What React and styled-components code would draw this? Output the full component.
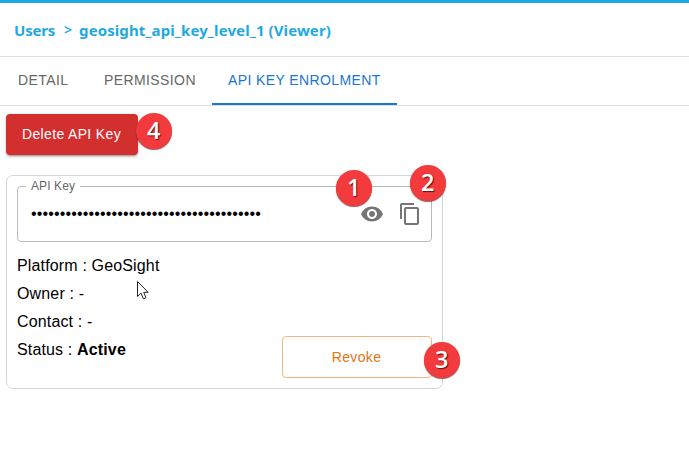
import React from "react";
import styled, { createGlobalStyle } from "styled-components";
import { MdVisibility, MdContentCopy } from "react-icons/md";

const GlobalStyle = createGlobalStyle`
  * { box-sizing: border-box; }
  body { margin: 0; background: #fff; overflow: hidden; }
`;

const Page = styled.div`
  position: relative;
  width: 689px;
  height: 458px;
  background: #fff;
  border-top: 3px solid #1fa9e1;
  font-family: "Liberation Sans", Arial, sans-serif;
  color: #000;
`;

const Header = styled.header`
  display: flex;
  align-items: center;
  height: 54px;
  padding: 0 14px 0 14px;
  border-bottom: 1px solid #dedede;
  color: #1fa9e1;
  font: 700 15px/20px "Noto Sans", "Open Sans", sans-serif;
  white-space: nowrap;
`;

const Crumb = styled.span`
  letter-spacing: ${(p) => p.$spacing};
`;

const Separator = styled.span`
  width: 24px;
  padding-left: 9px;
  font-size: 14px;
  font-weight: 600;
`;

const Tabs = styled.nav`
  display: flex;
  height: 49px;
  border-bottom: 1px solid #dedede;
`;

const Tab = styled.a`
  width: ${(p) => p.$width}px;
  padding: 13px 0 0 ${(p) => p.$inset}px;
  border-bottom: 2px solid ${(p) => (p.$active ? "#1976d2" : "transparent")};
  color: ${(p) => (p.$active ? "#1976d2" : "#666")};
  font-size: 14px;
  line-height: 20px;
  letter-spacing: 0.4px;
  white-space: nowrap;
`;

const Content = styled.main`
  display: flex;
  flex-direction: column;
  align-items: flex-start;
  gap: 20px;
  padding: 8px 6px;
`;

const Button = styled.button`
  display: flex;
  align-items: center;
  justify-content: center;
  border-radius: 4px;
  padding: 0;
  font: 14px/24px "Liberation Sans", Arial, sans-serif;
  letter-spacing: 0.35px;
`;

const DeleteButton = styled(Button)`
  width: 132px;
  height: 41px;
  padding: 0 1px 2px 0;
  border: 0;
  background: #d32f2f;
  color: #fff;
  box-shadow: 0 3px 1px -2px rgba(0, 0, 0, 0.2), 0 2px 2px rgba(0, 0, 0, 0.14),
    0 1px 5px rgba(0, 0, 0, 0.12);
`;

const RevokeButton = styled(Button)`
  width: 150px;
  height: 42px;
  padding-right: 1px;
  border: 1px solid #f5b67f;
  background: #fff;
  color: #e57310;
`;

const Card = styled.section`
  width: 437px;
  height: 214px;
  padding: 3px 10px 10px;
  border: 1px solid #d0d7de;
  border-radius: 7px;
`;

const KeyField = styled.fieldset`
  display: flex;
  align-items: center;
  width: 415px;
  height: 63px;
  margin: 0;
  padding: 0 9px 7px 13px;
  border: 1px solid #b9b9b9;
  border-radius: 4px;
`;

const Legend = styled.legend`
  margin-left: -5px;
  padding: 0 5px;
  color: #666;
  font-size: 12px;
  line-height: 14px;
  letter-spacing: 0.1px;
`;

const Secret = styled.span`
  flex: 1;
  font-size: 16px;
  line-height: 20px;
  letter-spacing: 0.15px;
`;

const IconButton = styled.span`
  display: flex;
  width: 24px;
  height: 24px;
  margin-left: ${(p) => p.$gap || 0}px;
  color: #757575;
`;

const Footer = styled.div`
  display: flex;
  justify-content: space-between;
  align-items: flex-end;
  height: 136px;
`;

const Details = styled.div`
  height: 126px;
  font-size: 16px;
  line-height: 28px;
  letter-spacing: 0.15px;
`;

const Callout = styled.span`
  position: absolute;
  left: ${(p) => p.$x}px;
  top: ${(p) => p.$y}px;
  display: flex;
  justify-content: center;
  width: 36px;
  height: 36px;
  border-radius: 50%;
  background: #f33b3d;
  color: #fff;
  font: 600 23.5px/35px "Open Sans", "Noto Sans", sans-serif;
  text-shadow: 1px 1px 1px rgba(60, 0, 0, 0.75);
  box-shadow: 0 1px 1px rgba(80, 0, 0, 0.65);
`;

const Pointer = styled.svg`
  position: absolute;
  left: 136px;
  top: 277px;
`;

const details = [
  ["Platform", "GeoSight"],
  ["Owner", "-"],
  ["Contact", "-"],
];

const callouts = [
  [1, 335.6, 166.5],
  [2, 409.6, 162],
  [3, 423.6, 338.5],
  [4, 135.6, 109.5],
];

export default function App() {
  return (
    <Page>
      <GlobalStyle />
      <Header>
        <Crumb $spacing="-0.2px">Users</Crumb>
        <Separator>&gt;</Separator>
        <Crumb $spacing="0.09px">geosight_api_key_level_1 (Viewer)</Crumb>
      </Header>
      <Tabs>
        <Tab $width={86} $inset={18}>DETAIL</Tab>
        <Tab $width={126} $inset={18}>PERMISSION</Tab>
        <Tab $width={185} $inset={16} $active>API KEY ENROLMENT</Tab>
      </Tabs>
      <Content>
        <DeleteButton>Delete API Key</DeleteButton>
        <Card>
          <KeyField>
            <Legend>API Key</Legend>
            <Secret>{"•".repeat(40)}</Secret>
            <IconButton><MdVisibility size={24} /></IconButton>
            <IconButton $gap={14}><MdContentCopy size={24} /></IconButton>
          </KeyField>
          <Footer>
            <Details>
              {details.map(([label, value]) => (
                <div key={label}>{label} : {value}</div>
              ))}
              <div>Status : <b>Active</b></div>
            </Details>
            <RevokeButton>Revoke</RevokeButton>
          </Footer>
        </Card>
      </Content>
      {callouts.map(([n, x, y]) => (
        <Callout key={n} $x={x} $y={y}>{n}</Callout>
      ))}
      <Pointer width="14" height="22" viewBox="0 0 14 22">
        <path
          d="M1.5 1.5V16.5L5 13.2L7.4 18.8L10 17.7L7.7 12.3H12.2Z"
          fill="#fff"
          stroke="#222"
          strokeWidth="1"
        />
      </Pointer>
    </Page>
  );
}
